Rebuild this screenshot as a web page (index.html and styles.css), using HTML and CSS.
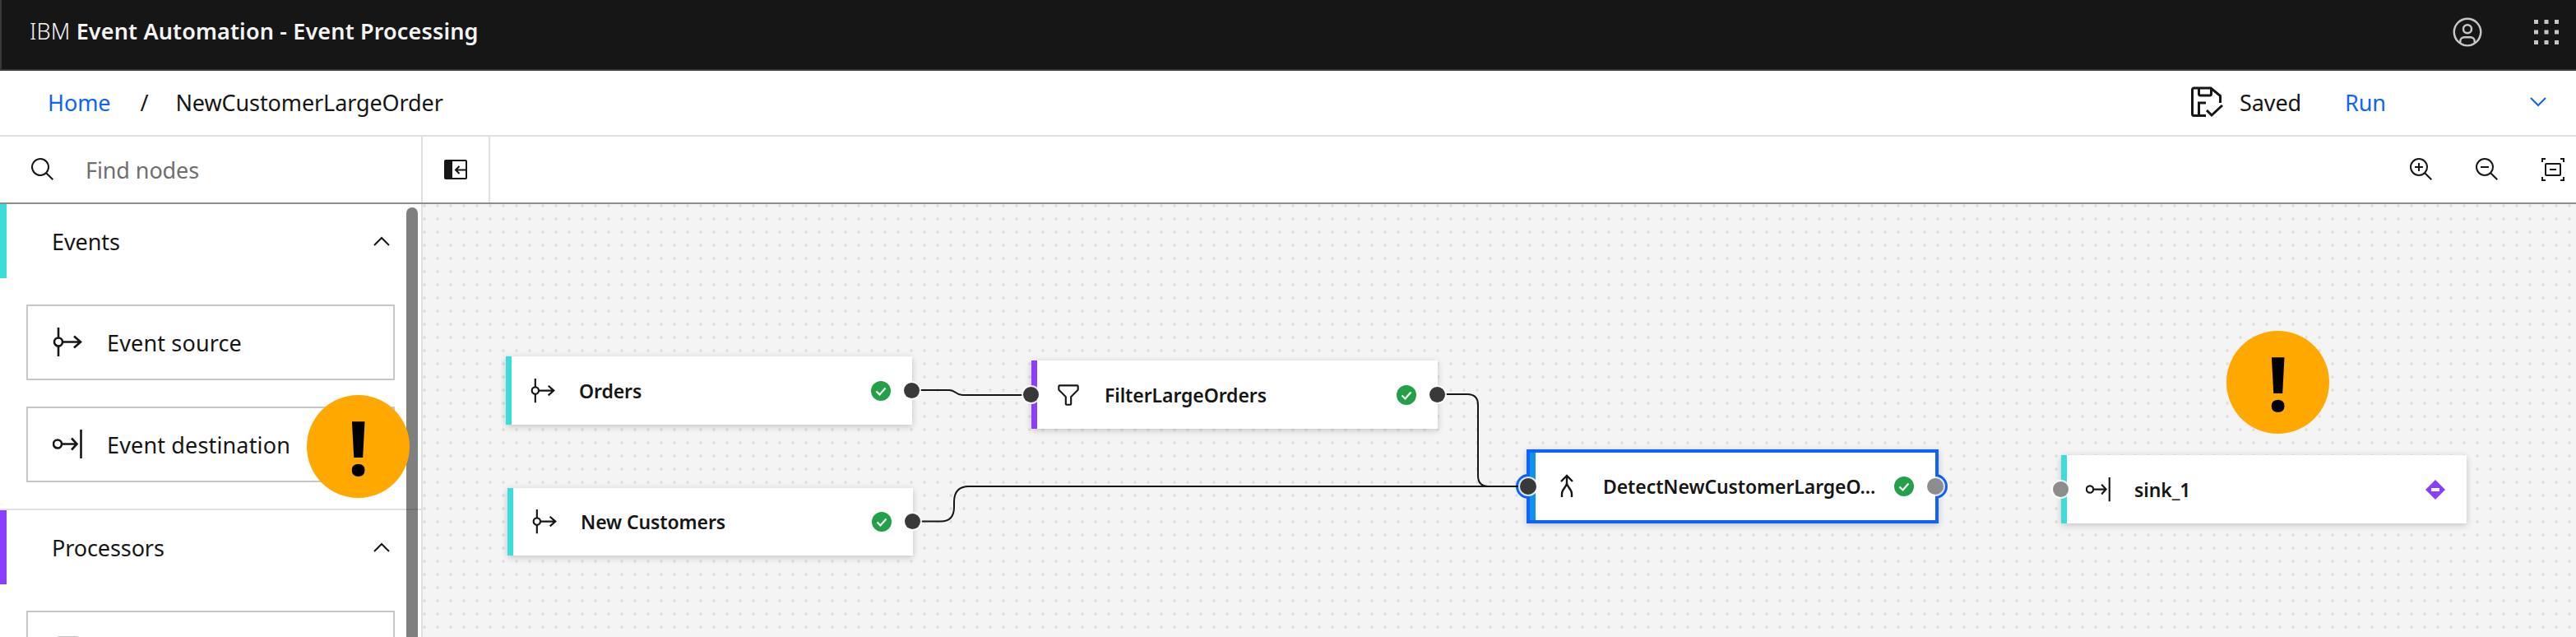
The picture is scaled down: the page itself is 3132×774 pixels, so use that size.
FILE: index.html
```html
<!DOCTYPE html>
<html lang="en">
<head>
<meta charset="utf-8">
<title>IBM Event Automation - Event Processing</title>
<link rel="stylesheet" href="styles.css">
</head>
<body>
<svg class="defs" width="0" height="0" aria-hidden="true">
  <symbol id="i-source" viewBox="0 0 36 36"><path d="M7 0V12.5M7 22.5V35M12 17.5H34M26 10.500L34 17.500L26 24.500" fill="none" stroke="currentColor" stroke-width="2.6"/><circle cx="7" cy="17.500" r="5" fill="none" stroke="currentColor" stroke-width="2.6"/></symbol>
  <symbol id="i-dest" viewBox="0 0 36 36"><path d="M34.500 0V35M11 17.500H29M23 10.500L29.500 17.500L23 24.500" fill="none" stroke="currentColor" stroke-width="2.6"/><circle cx="6" cy="17.500" r="5" fill="none" stroke="currentColor" stroke-width="2.6"/></symbol>
  <symbol id="i-filter" viewBox="0 0 32 32"><path d="M18,28H14a2,2,0,0,1-2-2V18.41L4.590,11A2,2,0,0,1,4,9.590V6A2,2,0,0,1,6,4H26a2,2,0,0,1,2,2V9.590A2,2,0,0,1,27.410,11L20,18.410V26A2,2,0,0,1,18,28ZM6,6V9.590l8,8V26h4V17.590l8-8V6Z" fill="currentColor"/></symbol>
  <symbol id="i-check" viewBox="0 0 24 24"><circle cx="12" cy="12" r="12" fill="#24a148"/><path d="M6.500 12.500L10.500 16.500L17.500 8.500" fill="none" stroke="#fff" stroke-width="2.200"/></symbol>
  <symbol id="i-chev-up" viewBox="0 0 20 12"><path d="M1 11L10 2L19 11" fill="none" stroke="currentColor" stroke-width="2"/></symbol>
</svg>

<header class="topbar">
  <div class="brand"><span class="brand-ibm">IBM</span> Event Automation - Event Processing</div>
  <div class="top-actions">
    <svg class="avatar" viewBox="0 0 32 32"><path fill="currentColor" d="M16 8a5 5 0 1 0 5 5 5 5 0 0 0-5-5zm0 8a3 3 0 1 1 3-3 3.003 3.003 0 0 1-3 3z"/><path fill="currentColor" d="M16 2a14 14 0 1 0 14 14A14.016 14.016 0 0 0 16 2zm-6 24.377V25a3.003 3.003 0 0 1 3-3h6a3.003 3.003 0 0 1 3 3v1.377a11.899 11.899 0 0 1-12 0zm13.992-1.451A5.002 5.002 0 0 0 19 20h-6a5.002 5.002 0 0 0-4.992 4.926 12 12 0 1 1 15.985 0z"/></svg>
    <svg class="apps" viewBox="0 0 30 30"><path fill="currentColor" d="M0 0h5v5H0zM12.500 0h5v5h-5zM25 0h5v5h-5zM0 12.500h5v5H0zM12.500 12.500h5v5h-5zM25 12.500h5v5h-5zM0 25h5v5H0zM12.500 25h5v5h-5zM25 25h5v5h-5z"/></svg>
  </div>
</header>

<nav class="crumbbar">
  <a class="crumb-home">Home</a>
  <span class="crumb-sep">/</span>
  <span class="crumb-current">NewCustomerLargeOrder</span>
  <div class="flow-actions">
    <svg class="save-icon" viewBox="0 0 40 38"><path d="M18 35.500H3.500A2 2 0 0 1 1.500 33.500V4A2 2 0 0 1 3.500 2H24L35.500 11.500V20M9.500 2.500V9A2 2 0 0 0 11.500 11H22.500A2 2 0 0 0 24.500 9V3M9.500 35V20H18M19 29L25 35L38 23" fill="none" stroke="currentColor" stroke-width="3"/></svg>
    <span class="saved">Saved</span>
    <button class="run"><span>Run</span><svg class="run-chev" viewBox="0 0 20 12"><path d="M1 1L10 10L19 1" fill="none" stroke="currentColor" stroke-width="2"/></svg></button>
  </div>
</nav>

<div class="toolbar">
  <div class="search">
    <svg class="search-icon" viewBox="0 0 32 32"><path fill="currentColor" d="M29,27.586l-7.552-7.552a11.018,11.018,0,1,0-1.414,1.414L27.586,29ZM4,13a9,9,0,1,1,9,9A9.010,9.010,0,0,1,4,13Z"/></svg>
    <span class="search-placeholder">Find nodes</span>
  </div>
  <button class="collapse">
    <svg viewBox="0 0 28 24" width="28" height="24"><rect width="28" height="24" rx="2" fill="#161616"/><rect x="10" y="2" width="16" height="20" fill="#fff"/><path d="M26 12.500H14M18.500 8L14 12.500L18.500 17" fill="none" stroke="#161616" stroke-width="2"/></svg>
  </button>
  <div class="view-tools">
    <svg class="tool" viewBox="0 0 32 32"><path d="M18 12h-4V8h-2v4H8v2h4v4h2v-4h4v-2z" fill="currentColor"/><path d="M21.448 20A10.856 10.856 0 0 0 24 13a11 11 0 1 0-11 11 10.856 10.856 0 0 0 7-2.552L27.586 29 29 27.586zM13 22a9 9 0 1 1 9-9 9.010 9.010 0 0 1-9 9z" fill="currentColor"/></svg>
    <svg class="tool" viewBox="0 0 32 32"><path d="M8 12h10v2H8z" fill="currentColor"/><path d="M21.448 20A10.856 10.856 0 0 0 24 13a11 11 0 1 0-11 11 10.856 10.856 0 0 0 7-2.552L27.586 29 29 27.586zM13 22a9 9 0 1 1 9-9 9.010 9.010 0 0 1-9 9z" fill="currentColor"/></svg>
    <svg class="tool-fit" viewBox="0 0 28 28"><path d="M1 5V1H5M23 1H27V5M27 23V27H23M5 27H1V23" fill="none" stroke="currentColor" stroke-width="2"/><rect x="5" y="7" width="18" height="14" rx="1" fill="none" stroke="currentColor" stroke-width="2"/><path d="M10 14H18" stroke="currentColor" stroke-width="2"/></svg>
  </div>
</div>

<main class="workspace">
  <aside class="palette">
    <section class="group">
      <div class="group-head group-events"><span>Events</span><svg class="chev"><use href="#i-chev-up"/></svg></div>
      <div class="group-items">
        <div class="item"><svg class="item-icon"><use href="#i-source"/></svg><span>Event source</span></div>
        <div class="item"><svg class="item-icon"><use href="#i-dest"/></svg><span>Event destination</span></div>
      </div>
    </section>
    <section class="group">
      <div class="group-head group-processors"><span>Processors</span><svg class="chev"><use href="#i-chev-up"/></svg></div>
      <div class="group-items">
        <div class="item"><svg class="item-icon item-filter"><use href="#i-filter"/></svg></div>
      </div>
    </section>
    <div class="scrollbar"></div>
    <div class="warning warning-palette">!</div>
  </aside>

  <section class="canvas">
    <svg class="links" width="2618" height="526">
      <path d="M594 226H640C648 226 648 232 656 232H739"/>
      <path d="M596 385.500H630C642 385.500 646 378 646 368V362C646 350 652 343 664 343H1332"/>
      <path d="M1233 231H1270Q1283 231 1283 244V330Q1283 343 1296 343H1332"/>
    </svg>

    <div class="node node-orders node-event">
      <svg class="node-icon"><use href="#i-source"/></svg>
      <span class="node-label">Orders</span>
      <svg class="status"><use href="#i-check"/></svg>
      <span class="port port-out"></span>
    </div>
    <div class="node node-customers node-event">
      <svg class="node-icon"><use href="#i-source"/></svg>
      <span class="node-label">New Customers</span>
      <svg class="status"><use href="#i-check"/></svg>
      <span class="port port-out"></span>
    </div>
    <div class="node node-filter node-processor">
      <svg class="node-icon"><use href="#i-filter"/></svg>
      <span class="node-label">FilterLargeOrders</span>
      <svg class="status"><use href="#i-check"/></svg>
      <span class="port port-in"></span>
      <span class="port port-out"></span>
    </div>
    <div class="node node-detect">
      <svg class="node-icon" viewBox="0 0 30 30"><path d="M15 2V11C15 16 9 18 9 24V28M21 28V24C21 18 15 16 15 11M8 9L15 2L22 9" fill="none" stroke="currentColor" stroke-width="2.400"/></svg>
      <span class="node-label">DetectNewCustomerLargeO...</span>
      <svg class="status"><use href="#i-check"/></svg>
      <span class="ring ring-in"></span>
      <span class="ring ring-out"></span>
      <span class="port port-in"></span>
      <span class="port port-out port-idle"></span>
    </div>
    <div class="node node-sink node-event">
      <svg class="node-icon"><use href="#i-dest"/></svg>
      <span class="node-label">sink_1</span>
      <svg class="status" viewBox="0 0 24 24"><path d="M12 0L24 12L12 24L0 12Z" fill="#8a3ffc"/><rect x="7" y="10" width="10" height="4" fill="#fff"/></svg>
      <span class="port port-in port-idle"></span>
    </div>
    <div class="warning warning-canvas">!</div>
  </section>
</main>
</body>
</html>
```
FILE: styles.css
```css
* { box-sizing: border-box; }
html, body { margin: 0; height: 100%; overflow: hidden; }
body {
  display: flex;
  flex-direction: column;
  font-family: "Noto Sans", "Open Sans", sans-serif;
  font-size: 27px;
  letter-spacing: -.1px;
  color: #161616;
  background: #fff;
}
.defs { position: absolute; }
button { font: inherit; letter-spacing: inherit; background: none; border: 0; padding: 0; color: inherit; }

.topbar {
  flex: none;
  height: 86px;
  display: flex;
  align-items: center;
  justify-content: space-between;
  padding: 0 21px 6px 34px;
  background: #161616;
  color: #f4f4f4;
  border-left: 2px solid #393939;
  border-bottom: 2px solid #393939;
}
.brand { font-weight: 600; font-size: 27px; letter-spacing: .15px; margin-bottom: 3px; }
.brand-ibm { font-weight: 300; }
.top-actions { display: flex; align-items: center; gap: 61px; color: #c6c6c6; }
.avatar { width: 40px; height: 40px; }
.apps { width: 30px; height: 30px; }

.crumbbar {
  flex: none;
  height: 80px;
  display: flex;
  align-items: center;
  padding: 0 36px 2px 58px;
  border-bottom: 2px solid #e0e0e0;
}
.crumb-home { color: #0f62fe; }
.crumb-sep { margin: 0 33px 0 36px; }
.flow-actions { margin-left: auto; display: flex; align-items: center; }
.save-icon { width: 40px; height: 38px; margin-right: 19px; }
.saved { width: 128px; }
.run {
  width: 245px;
  display: flex;
  align-items: center;
  justify-content: space-between;
  color: #0f62fe;
}
.run-chev { width: 20px; height: 12px; }

.toolbar {
  flex: none;
  height: 82px;
  display: flex;
  align-items: stretch;
  border-bottom: 2px solid #8d8d8d;
}
.search {
  width: 514px;
  display: flex;
  align-items: center;
  padding-left: 36px;
  border-right: 2px solid #e0e0e0;
}
.search-icon { width: 32px; height: 32px; margin-right: 36px; }
.search-placeholder { color: #6f6f6f; }
.collapse {
  width: 82px;
  display: flex;
  align-items: center;
  justify-content: center;
  border-right: 2px solid #e0e0e0;
}
.view-tools {
  margin-left: auto;
  display: flex;
  align-items: center;
  padding-right: 14px;
}
.tool { width: 32px; height: 32px; margin-right: 48px; }
.tool + .tool { margin-right: 50px; }
.tool-fit { width: 28px; height: 28px; }

.workspace { flex: 1; min-height: 0; display: flex; }

.palette {
  position: relative;
  flex: none;
  width: 514px;
  border-right: 2px solid #e0e0e0;
  overflow: hidden;
}
.group + .group { border-top: 2px solid #e0e0e0; }
.group-head {
  height: 90px;
  display: flex;
  align-items: center;
  justify-content: space-between;
  padding: 0 38px 0 55px;
  border-left: 8px solid;
}
.group-events { border-left-color: #3ddbd9; }
.group-processors { border-left-color: #8a3ffc; }
.chev { width: 20px; height: 12px; }
.group-items {
  display: flex;
  flex-direction: column;
  gap: 32px;
  padding: 32px;
}
.item {
  height: 92px;
  display: flex;
  align-items: center;
  gap: 30px;
  padding-left: 30px;
  border: 2px solid #c6c6c6;
  letter-spacing: .15px;
}
.item-icon { width: 36px; height: 36px; flex: none; }
.item-filter { width: 37px; height: 37px; margin-top: -2px; }
.scrollbar {
  position: absolute;
  left: 494px;
  top: 4px;
  width: 14px;
  height: 100%;
  border-radius: 7px 7px 0 0;
  background: rgba(0, 0, 0, .5);
}

.warning {
  position: absolute;
  width: 125px;
  height: 125px;
  border-radius: 50%;
  display: flex;
  align-items: center;
  justify-content: center;
  background: #ffa800;
  color: #000;
  font-family: "Open Sans", sans-serif;
  font-weight: 700;
  font-size: 92px;
  line-height: 1;
}
.warning-palette { left: 373px; top: 232px; }
.warning-canvas { left: 2193px; top: 154px; }

.canvas {
  position: relative;
  z-index: 0;
  flex: 1;
  min-width: 0;
  overflow: hidden;
  background-color: #f4f4f4;
  background-image: radial-gradient(circle at 2px 2px, #e0e0e0 0, #e0e0e0 1.500px, transparent 2.200px);
  background-size: 16px 16px;
}
.links { position: absolute; left: 0; top: 0; }
.links path { fill: none; stroke: #161616; stroke-width: 2; }

.node {
  position: absolute;
  height: 83px;
  display: flex;
  align-items: center;
  padding: 0 26px 0 23px;
  background: #fff;
  border-left: 7px solid;
  box-shadow: 0 2px 8px rgba(0, 0, 0, .2);
}
.node-event { border-left-color: #3ddbd9; }
.node-processor { border-left-color: #8a3ffc; }
.node-orders { left: 101px; top: 185px; width: 494px; }
.node-customers { left: 103px; top: 345px; width: 493px; height: 82px; }
.node-filter { left: 740px; top: 190px; width: 494px; }
.node-filter .node-icon { width: 34px; height: 34px; margin: 0 -2px; }
.node-sink { left: 1992px; top: 305px; width: 493px; }
.node-detect {
  left: 1342px;
  top: 298px;
  width: 501px;
  height: 90px;
  padding: 0 26px 0 30px;
  border: 4px solid #0f62fe;
  background: linear-gradient(90deg, #1192e8 7px, #fff 7px);
  background-origin: padding-box;
}
.node-icon { flex: none; width: 30px; height: 30px; }
.node-label {
  flex: 1;
  min-width: 0;
  margin: 0 18px 0 29px;
  font-size: 23px;
  font-weight: 600;
  white-space: nowrap;
  overflow: hidden;
}
.status { flex: none; width: 24px; height: 24px; }

.port {
  position: absolute;
  top: 50%;
  width: 19px;
  height: 19px;
  margin-top: -10px;
  border-radius: 50%;
  background: #393939;
  box-shadow: 0 0 0 2px rgba(255, 255, 255, .85);
}
.port-in { left: -17px; }
.port-out { right: -9px; }
.port-idle { background: #8d8d8d; }
.node-detect .port { width: 20px; height: 20px; }
.node-detect .port-in { left: -12px; }
.node-detect .port-out { right: -10px; }
.ring {
  position: absolute;
  top: 50%;
  width: 30px;
  height: 30px;
  margin-top: -15px;
  border-radius: 50%;
  background: #0f62fe;
  z-index: -1;
}
.ring-in { left: -17px; }
.ring-out { right: -15px; }
```
